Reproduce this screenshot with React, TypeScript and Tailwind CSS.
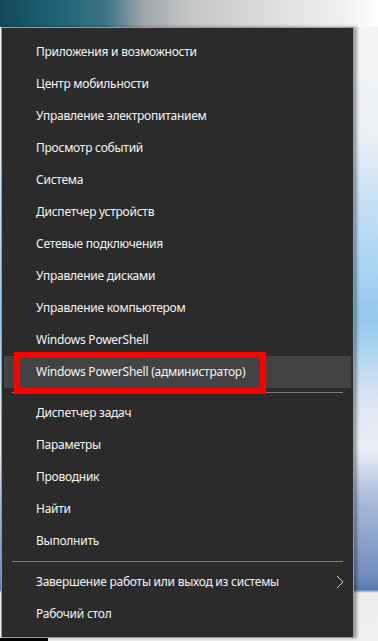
type Item = { label: string; active?: boolean; more?: boolean };

const groups: Item[][] = [
  [
    { label: "Приложения и возможности" },
    { label: "Центр мобильности" },
    { label: "Управление электропитанием" },
    { label: "Просмотр событий" },
    { label: "Система" },
    { label: "Диспетчер устройств" },
    { label: "Сетевые подключения" },
    { label: "Управление дисками" },
    { label: "Управление компьютером" },
    { label: "Windows PowerShell" },
    { label: "Windows PowerShell (администратор)", active: true },
  ],
  [
    { label: "Диспетчер задач" },
    { label: "Параметры" },
    { label: "Проводник" },
    { label: "Найти" },
    { label: "Выполнить" },
  ],
  [
    { label: "Завершение работы или выход из системы", more: true },
    { label: "Рабочий стол" },
  ],
];

export default function App() {
  return (
    <div className="relative h-[641px] w-[378px] overflow-hidden bg-[linear-gradient(to_bottom,#f3f4f5_0%,#eef1f4_20%,#c4e0f5_32%,#93c8ee_50%,#d9e6f2_62%,#eaf0f6_70%,#a8bad8_78%,#6f8cbe_90%,#5b78ad_92%,#eeeeee_92.5%,#f0f0f0_100%)] font-['Noto_Sans',sans-serif]">
      {/* desktop strip above the menu */}
      <div className="h-[27px] w-full bg-[linear-gradient(to_right,#124a5b_0%,#1f6377_15%,#3b7484_28%,#9ea8ab_38%,#c3c5c6_50%,#dcdcdc_70%,#efefef_90%,#ffffff_100%)]" />

      <div className="ml-px w-[353px] border border-[#9a9a9a] bg-[#2b2b2b] pb-[7px] pt-2 shadow-[3px_0_3px_rgba(0,0,0,0.35)]">
        {groups.map((group, gi) => (
          <div key={gi}>
            {gi > 0 && <div className="mx-2.5 my-1 h-px bg-[#7c7c7c]" />}
            {group.map((item) => (
              <Row key={item.label} {...item} />
            ))}
          </div>
        ))}
      </div>

      <div className="h-[3px] w-12 bg-black" />
    </div>
  );
}

function Row({ label, active, more }: Item) {
  return (
    <div
      className={`relative mx-0.5 flex h-8 items-center pl-[32px] pr-[7px] text-[12px] tracking-[-0.25px] text-[#f6f6f6] ${
        active ? "bg-[#434343]" : ""
      }`}
    >
      <span>{label}</span>
      {more && (
        <svg className="ml-auto" width="8" height="14" viewBox="0 0 8 14" fill="none">
          <polyline points="1,1 7,7 1,13" stroke="#d4d4d4" strokeWidth="1" />
        </svg>
      )}
      {active && (
        <span className="absolute -top-1 left-2.5 h-[42px] w-[252px] border-[6px] border-[#ff0000]" />
      )}
    </div>
  );
}
